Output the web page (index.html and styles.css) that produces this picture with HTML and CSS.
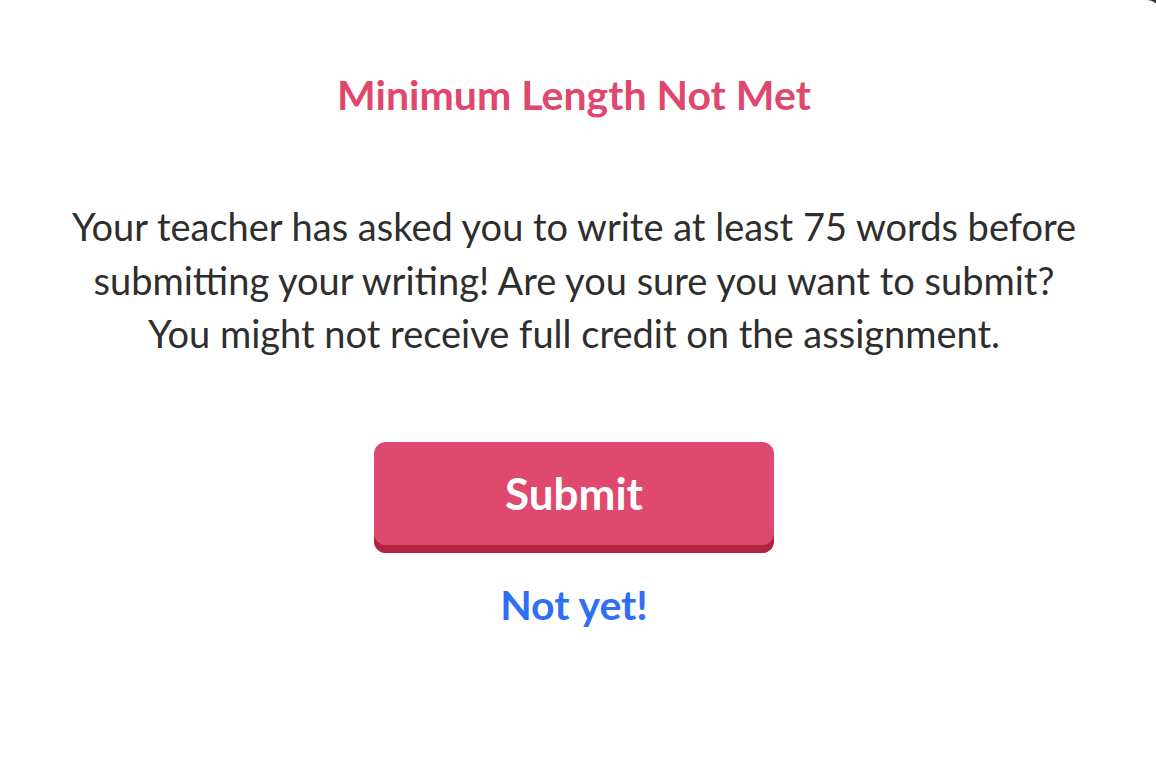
FILE: index.html
```html
<!DOCTYPE html>
<html>
	<head>
		<meta charset="UTF-8">
		<title>Minimum Length Not Met</title>
		<link rel="stylesheet" href="styles.css">
	</head>
	<body>
		<div class="modal">
			<h2 class="modal-title">Minimum Length Not Met</h2>
			<p class="modal-text">Your teacher has asked you to write at least 75 words before submitting your writing! Are you sure you want to submit? You might not receive full credit on the assignment.</p>
			<div class="modal-actions">
				<button class="btn-submit">Submit</button>
				<button class="btn-link">Not yet!</button>
			</div>
		</div>
	</body>
</html>
```

FILE: styles.css
```css
*{
	margin: 0;
	padding: 0;
	box-sizing: border-box;
}
html,body{
	height: 100%;
}
body{
	background: #333;
	overflow: hidden;
	font-family: Lato, "Open Sans", sans-serif;
}
.modal{
	height: 100%;
	margin-right: -6px;
	padding-right: 14px;
	background: #fff;
	border-top-right-radius: 16px;
	display: flex;
	flex-direction: column;
	align-items: center;
	padding-top: 71px;
	text-align: center;
}
.modal-title{
	font-size: 41px;
	font-weight: 700;
	color: #e0476d;
	line-height: 48px;
}
.modal-text{
	margin-top: 81px;
	width: 1012px;
	font-size: 38px;
	line-height: 53.5px;
	color: #2e2e2e;
}
.modal-actions{
	margin-top: 81px;
	display: flex;
	flex-direction: column;
	align-items: center;
}
button{
	border: none;
	background: none;
	font-family: inherit;
	cursor: pointer;
}
.btn-submit{
	width: 400px;
	height: 111px;
	border-radius: 12px;
	background: #df496d;
	box-shadow: inset 0 -8px 0 #b2233e;
	padding-bottom: 8px;
	color: #fff;
	font-size: 44px;
	font-weight: 700;
}
.btn-link{
	margin-top: 28px;
	color: #2f6ff4;
	font-size: 41px;
	font-weight: 700;
	line-height: 48px;
}
```
